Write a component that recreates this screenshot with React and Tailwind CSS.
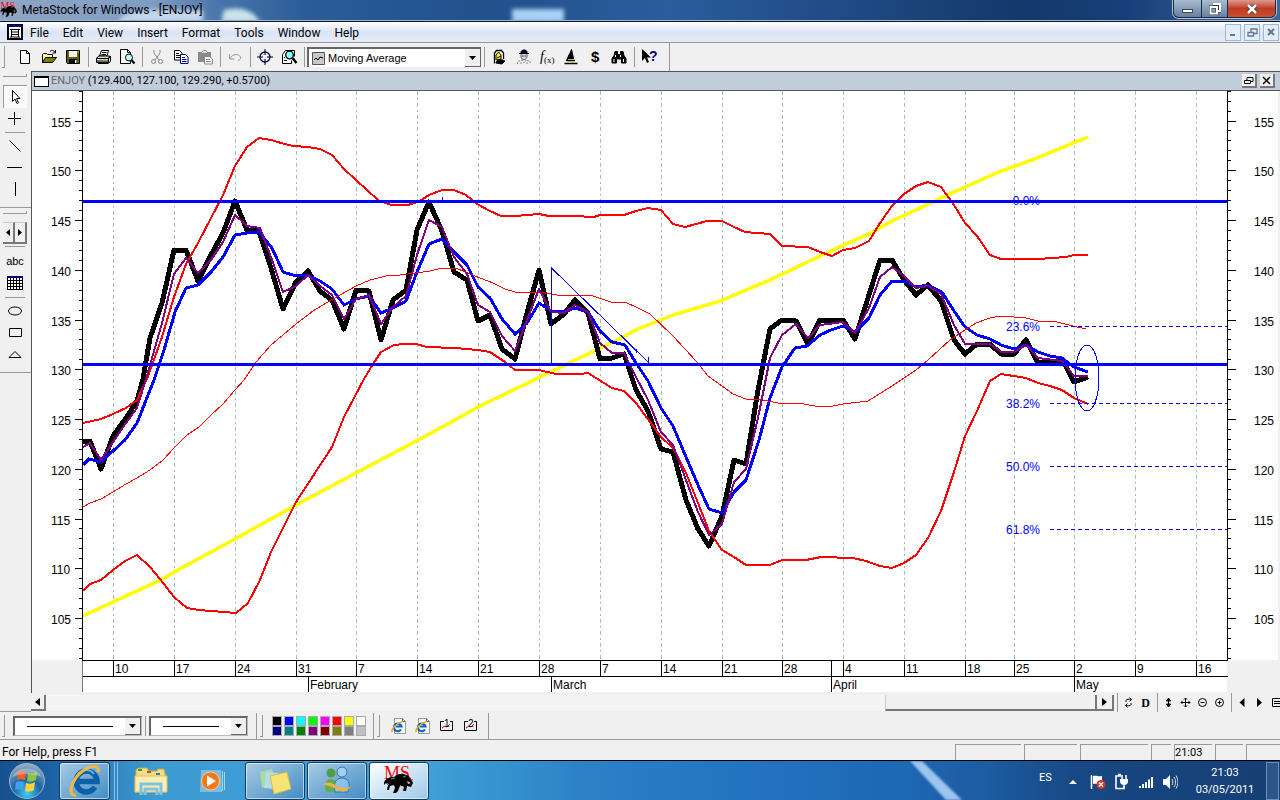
import { useState } from "react";

const menus = ["File", "Edit", "View", "Insert", "Format", "Tools", "Window", "Help"];

// ---------------------------------------------------------------- chart data
const price =
  "83,441 90,441 101,469 113,436 126,418 137,401 143,379 150,338 162,303 174,250 186,250 198,281 211,255 223,233 235,201 247,230 259,231 271,268 283,309 296,282 308,271 320,291 332,300 344,329 356,290 369,291 381,340 393,300 406,290 417,230 429,202 442,231 454,272 467,280 478,321 490,315 502,349 515,359 527,313 539,270 551,324 564,314 575,300 588,313 600,359 612,358 624,354 636,390 648,411 661,449 673,452 686,500 698,529 709,546 722,516 734,460 746,464 758,390 770,329 782,320 796,321 808,344 820,320 832,321 843,320 855,339 868,298 880,260 892,260 904,280 916,295 928,285 941,301 954,340 965,354 977,344 990,344 1001,354 1014,354 1026,340 1038,363 1050,361 1063,361 1074,382 1088,377";
const fastAverage =
  "83,447 90,443 101,460 113,442 126,423 137,408 146,379 162,323 174,274 186,258 198,273 211,260 223,242 235,215 247,226 260,228 271,257 283,292 296,286 308,275 320,286 332,295 344,319 356,299 369,295 381,324 393,307 406,296 417,255 429,220 442,227 454,257 467,274 478,305 490,312 502,336 515,351 527,320 539,289 551,312 564,313 575,305 588,312 600,343 612,353 624,353 636,377 648,400 661,432 673,445 686,480 698,512 709,535 722,524 734,482 746,469 758,418 770,358 782,335 796,324 808,338 820,325 843,322 855,333 869,308 880,277 892,267 904,276 916,288 928,286 941,294 954,325 965,344 990,344 1001,352 1014,352 1026,345 1038,358 1062,361 1074,376 1088,376";
const slowAverage =
  "83,465 89,459 101,462 113,451 125,440 137,423 154,380 164,350 175,312 186,288 198,285 211,272 223,257 235,235 247,233 259,232 272,248 283,272 296,276 308,275 320,281 332,289 344,305 356,299 369,296 381,313 393,308 406,301 417,272 429,244 442,239 454,252 467,265 478,287 490,298 502,319 515,334 527,323 539,303 551,311 564,312 575,308 588,312 600,331 612,342 625,345 636,363 648,381 661,408 673,426 686,457 698,485 709,509 722,513 734,492 746,480 759,440 770,398 782,367 795,348 807,346 820,335 831,330 843,326 855,332 869,318 880,295 892,281 904,281 916,287 928,285 942,292 954,311 965,327 977,335 990,339 1001,345 1014,349 1026,345 1038,352 1050,356 1062,358 1074,367 1088,372";
const upperBand =
  "83,423 101,419 113,414 126,408 137,400 147,379 162,337 174,297 186,264 198,243 223,195 235,166 247,147 259,138 271,140 281,143 293,146 308,147 320,149 332,155 344,169 356,180 378,200 391,205 408,205 420,201 429,195 442,190 454,190 466,195 477,204 490,211 501,216 515,216 527,215 539,214 549,216 574,216 594,217 600,215 624,215 636,211 648,208 661,210 673,224 685,227 707,221 722,221 734,227 745,232 770,234 782,246 808,247 820,252 832,256 843,250 855,248 869,241 880,223 892,206 904,194 916,186 928,182 941,187 954,205 965,223 977,236 990,255 1001,259 1038,259 1066,257 1074,255 1088,255";
const lowerBand =
  "83,591 90,584 101,580 113,570 125,561 137,555 150,567 160,579 174,597 187,608 199,610 236,613 248,603 260,580 271,552 296,502 332,447 344,417 364,379 373,364 381,352 394,345 405,344 416,344 427,347 455,348 478,350 490,352 505,362 515,370 539,370 556,374 580,374 588,373 612,388 624,391 636,403 661,437 673,448 686,473 698,503 709,531 722,550 734,557 746,565 770,565 782,560 806,560 821,557 853,558 866,561 880,566 892,568 904,563 916,555 928,538 941,511 954,472 965,436 977,411 990,381 1001,374 1026,378 1038,383 1050,386 1062,390 1074,398 1088,404";
const midBand =
  "83,507 90,503 101,499 113,492 126,484 137,478 150,470 163,460 174,448 187,435 199,427 211,415 223,404 235,390 244,380 256,362 271,345 296,324 313,311 333,299 356,286 370,280 386,276 400,275 416,273 430,271 442,268 458,269 480,278 493,283 505,289 515,292 539,292 563,296 590,295 611,302 625,302 638,308 650,314 673,336 696,361 708,376 722,386 733,394 746,399 763,400 783,404 798,403 815,406 833,406 843,404 868,401 892,386 916,370 928,360 950,340 965,330 976,323 990,318 1001,316 1026,318 1038,321 1053,321 1073,326 1086,329";
const trend =
  "83,616 113,602 163,579 174,572 235,539 296,505 356,473 420,439 455,420 478,407 563,366 623,337 638,329 673,315 720,301 770,280 820,256 855,240 869,234 892,221 965,187 1001,171 1032,160 1088,137";

const weeks = [
  [113, "10"], [174, "17"], [235, "24"], [296, "31"], [356, "7"], [417, "14"], [478, "21"],
  [539, "28"], [600, "7"], [661, "14"], [722, "21"], [782, "28"], [843, "4"], [904, "11"],
  [965, "18"], [1014, "25"], [1074, "2"], [1135, "9"], [1196, "16"],
];
const months = [[308, "February"], [551, "March"], [831, "April"], [1074, "May"]];
const levels = [[326, "23.6%"], [403, "38.2%"], [466, "50.0%"], [529, "61.8%"]];
const ticks = Array.from({ length: 58 }, (_, i) => 101 + i);
const tickY = (v) => Math.round(120.5 + (155 - v) * 9.95) + 0.5;

const PriceChart = () => (
  <svg viewBox="32 91 1248 602" className="block h-auto w-full" role="img" aria-label="ENJOY price chart">
    <rect x="32" y="91" width="1248" height="602" fill="#f0f0f0" />
    <rect x="32" y="91" width="1246" height="569" fill="#fff" />
    <rect x="82" y="660" width="1145" height="32" fill="#fff" />
    <g shapeRendering="crispEdges" fill="none">
      {weeks.map(([x]) => (
        <path key={x} d={`M${x + 0.5} 91V660`} stroke="#a3bfa9" strokeDasharray="4 3 2 3" />
      ))}
      <polyline points={trend} stroke="#ff0" strokeWidth="3.5" />
      <polyline points={price} stroke="#000" strokeWidth="5" strokeLinejoin="round" />
      <polyline points={slowAverage} stroke="#00f" strokeWidth="3" />
      <polyline points={upperBand} stroke="#f00" strokeWidth="2" />
      <polyline points={lowerBand} stroke="#f00" strokeWidth="2" />
      <polyline points={midBand} stroke="#f00" />
      <polyline points={fastAverage} stroke="#800080" strokeWidth="2" />
      <path d="M83 201.5H1227M83 364.5H1227" stroke="#00f" strokeWidth="3" />
      <path d="M551.5 366V268L648 362M648.5 363V357M636.5 353V349M442.5 200V197" stroke="#00f" />
      {levels.map(([y]) => (
        <path key={y} d={`M1050 ${y + 0.5}H1227`} stroke="#00f" strokeDasharray="4 3" />
      ))}
      <ellipse cx="1087" cy="378" rx="12" ry="33" stroke="#00f" />
      <path d="M82.5 91V692M1227.5 91V660M82 660.5H1228M82 676.5H1228" stroke="#000" />
      <path d="M82.5 661V692" stroke="#777" />
      {ticks.map((v) => (
        <path
          key={v}
          d={v % 5 ? `M79 ${tickY(v)}H82M1228 ${tickY(v)}H1231` : `M75 ${tickY(v)}H82M1228 ${tickY(v)}H1236`}
          stroke="#000"
        />
      ))}
      {weeks.map(([x]) => (
        <path key={x} d={`M${x + 0.5} 661V676`} stroke="#000" />
      ))}
      {months.map(([x]) => (
        <path key={x} d={`M${x + 0.5} 677V692`} stroke="#000" />
      ))}
      <path d="M831.5 661V676" stroke="#000" />
    </g>
    <g className="font-['Liberation_Sans',Arial,sans-serif] text-[12px]" fill="#000">
      {ticks.filter((v) => v % 5 === 0 && v > 101).map((v) => (
        <g key={v}>
          <text x="51" y={tickY(v) + 5}>{v}</text>
          <text x="1254" y={tickY(v) + 5}>{v}</text>
        </g>
      ))}
      {weeks.map(([x, label]) => (
        <text key={x} x={x + 2} y="673">{label}</text>
      ))}
      {months.map(([x, label]) => (
        <text key={x} x={x + 2} y="689">{label}</text>
      ))}
      <g fill="#00f" textAnchor="end">
        <text x="1040" y="205">0.0%</text>
        {levels.map(([y, label]) => (
          <text key={y} x="1040" y={y + 5}>{label}</text>
        ))}
      </g>
    </g>
  </svg>
);

// --------------------------------------------------------------------- icons
const Icon = ({ children, size = 16 }) => (
  <svg width={size} height={size} viewBox="0 0 16 16" fill="none" stroke="#000" aria-hidden="true" className="shrink-0 overflow-visible">
    {children}
  </svg>
);

const NewIcon = () => <Icon><path d="M3.5 1.5h6l3 3v10h-9zM9.5 1.5v3h3" fill="#fff" /></Icon>;
const OpenIcon = () => (
  <Icon>
    <path d="M1.5 13.5v-8l1-1h3l1 1h5v3" fill="#ffffa0" />
    <path d="M1.5 13.5l3-5h11l-4 5z" fill="#808000" />
    <path d="M9 2.5c2-2 4-1 5 1M14.5 1v3h-3" />
  </Icon>
);
const SaveIcon = () => (
  <Icon>
    <path d="M1.5 1.5h13v13h-12l-1-1z" fill="#606000" />
    <path d="M4 2h8v6H4z" fill="#f0f0f0" stroke="none" />
    <path d="M4 10h8v4H4z" fill="#000" stroke="none" />
    <path d="M10 11h1.5v3H10zM12.5 2.5h1v1h-1z" fill="#fff" stroke="none" />
  </Icon>
);
const PrintIcon = () => (
  <Icon>
    <path d="M4.5 7l2-5.500h7L12 7z" fill="#fff" />
    <path d="M7 3.5h4.500M6.500 5.500H11" />
    <path d="M1.500 9.500l2-2.500h11l-1 2.500v4h-12z" fill="#ddd" />
    <path d="M1 9.500h13l1.500-2.500v5l-2 2.500M1 12h12M3 14.500h10" />
    <path d="M8 11h3" stroke="#cc0" />
  </Icon>
);
const PreviewIcon = () => (
  <Icon>
    <path d="M1.500.5h7l3 3v11h-10z" fill="#fff" />
    <path d="M8.500.5v3h3" />
    <circle cx="10" cy="8.500" r="3.500" fill="#c0ffff" />
    <path d="M12.500 11l3 3.500" strokeWidth="2" />
  </Icon>
);
const CutIcon = () => (
  <Icon>
    <g stroke="#8a8a8a">
      <path d="M5 1v3l5 7M11 1v3l-5 7" />
      <circle cx="4.500" cy="12.500" r="2" /><circle cx="11.500" cy="12.500" r="2" />
    </g>
  </Icon>
);
const CopyIcon = () => (
  <Icon>
    <path d="M1.500 1.500h5l2.500 2.500v7h-7.500z" fill="#fff" />
    <path d="M3 4.500h3M3 6.500h4M3 8.500h4" />
    <path d="M7.500 5.500h5l2.500 2.500v6.500h-7.500z" fill="#fff" stroke="#000080" />
    <path d="M9 8.500h3M9 10.500h4.500M9 12.500h4.500" stroke="#000080" />
  </Icon>
);
const PasteIcon = () => (
  <Icon>
    <path d="M1 3h13v10H1z" fill="#8a8a8a" stroke="none" />
    <path d="M4.500 4.500V3l2-1.500h2l2 1.500v1.500z" fill="#ddd" stroke="#8a8a8a" />
    <path d="M7.500 7.500h5l3 2.500v5h-8z" fill="#f4f4f4" stroke="#8a8a8a" />
    <path d="M9 10.500h4M9 12.500h5" stroke="#8a8a8a" />
  </Icon>
);
const UndoIcon = () => (
  <Icon><path d="M2.500 5v5h5M3 9.500C6 4 12 5 13.500 8c.5 2-1 3-2.500 3.500" stroke="#999" /></Icon>
);
const TargetIcon = () => (
  <Icon>
    <circle cx="8" cy="8" r="5" stroke="#000060" strokeWidth="1.300" />
    <path d="M8 0v6M8 10v6M0 8h6M10 8h6" stroke="#000" />
  </Icon>
);
const ZoomIcon = () => (
  <Icon>
    <path d="M1.500 5.500v9h9v-3M1.500 5.500l3-4h9v6" fill="#fff" />
    <path d="M3 11.500h3M3 8.500h1" />
    <circle cx="8.500" cy="6" r="3.800" fill="#80ffff" strokeWidth="1.300" />
    <path d="M11.500 9l4 5" strokeWidth="2.400" />
  </Icon>
);
const ExpertIcon = () => (
  <Icon>
    <path d="M3.500 14.500V4l2-2.500h5l2 2.500v6" fill="#fff" strokeWidth="1.300" />
    <path d="M5 6l2.500-3L10 6v4l-5 1z" fill="#ff0" />
    <path d="M6 9l4-2M5 14c1-4 5-4 9-2l-3 3z" fill="#000" />
  </Icon>
);
const PersonIcon = () => (
  <Icon>
    <path d="M4 4.500h10M6 4V2.500l2-1.500h2.500L12 2.500V4z" fill="#000" />
    <path d="M8 3h2" stroke="#00f" />
    <path d="M6 5v3l1.500 2.500h3L12 8V5" fill="#ddd" stroke="#666" />
    <path d="M7 7h1.500M9.500 7H11" stroke="#222" />
    <path d="M2.500 15l.5-2.500 4-1.500 2 3 2-3 4 1.500.5 2.500M5 14h2M11 14h2" stroke="#888" strokeDasharray="2 1" />
  </Icon>
);
const FxIcon = () => (
  <Icon>
    <g fill="#000" stroke="none" className="font-['Liberation_Serif',serif]">
      <text x="1" y="12" className="text-[14px] italic">f</text>
      <text x="5" y="14" className="text-[9px]">(x)</text>
    </g>
  </Icon>
);
const ExplorerIcon = () => (
  <Icon>
    <path d="M8.500.5l1 4 1 5H5z" fill="#000" />
    <path d="M7 4.500L3.500 12M1.500 14.500h13M4 11.500h8" strokeWidth="1.600" />
    <path d="M6 13h6" stroke="#cc0" />
  </Icon>
);
const DollarIcon = () => (
  <Icon>
    <text x="4" y="13" fill="#000" stroke="none" className="font-['Liberation_Sans',sans-serif] text-[15px] font-bold">$</text>
  </Icon>
);
const BinocularsIcon = () => (
  <Icon>
    <path d="M4 2.500h2.500v3h3v-3H12l1 4 2 3v4.500h-4.500V10h-5v4H1V9.500l2-3z" fill="#000" />
    <path d="M4.500 6v2M9.500 6v2M3 10v3M12.500 10v3" stroke="#fff" />
  </Icon>
);
const HelpIcon = () => (
  <Icon>
    <path d="M1 0v12l3-3 2 5 2-1-2-4.500h4z" fill="#000" stroke="none" />
    <text x="8" y="12" fill="#000080" stroke="none" className="font-['Liberation_Sans',sans-serif] text-[14px] font-bold">?</text>
  </Icon>
);

const PointerIcon = () => <Icon><path d="M4.500 1.500v11l2.500-2.500 2 4.500 1.500-.8-2-4.200H12z" fill="#fff" /></Icon>;
const CrossIcon = () => <Icon><path d="M1 7.500h13M7.500 1v13" /></Icon>;
const DiagonalIcon = () => <Icon><path d="M2.500 2.500l11 11" /></Icon>;
const HLineIcon = () => <Icon><path d="M0 7.500h15" /></Icon>;
const VLineIcon = () => <Icon><path d="M8.500 0v14" /></Icon>;
const GridIcon = () => (
  <Icon>
    <path d="M0 1h16v14H0z" fill="#fff" stroke="none" />
    <path d="M.5 1v14M3.500 1v14M6.500 1v14M9.500 1v14M12.500 1v14M15.500 1v14M0 5.500h16M0 8.500h16M0 11.500h16M0 14.500h16" />
    <path d="M0 2h16" stroke="#000080" strokeWidth="2" />
  </Icon>
);
const EllipseIcon = () => <Icon><ellipse cx="8" cy="8" rx="6.500" ry="4" /></Icon>;
const RectIcon = () => <Icon><path d="M2.500 3.500h12v8h-12z" /></Icon>;
const TriangleIcon = () => <Icon><path d="M8 4.500l6 6H2z" /></Icon>;

const BullIcon = ({ size = 32 }) => (
  <svg width={size} height={size} viewBox="0 0 32 32" aria-hidden="true" className="shrink-0 overflow-visible">
    <text x="1" y="14" fill="#f00" className="font-['Liberation_Serif',serif] text-[18px]">MS</text>
    <path
      d="M1 18c1-5 6-6 10-6 4-4 9-4 12-2 3 0 5 3 7 8l-2 4-4-1-1 5h-3l1-4-4-1-2 5-2 2h-3l2-5-1-3-4 1-1 4H4l1-5-2-2-2 2z"
      fill="#000"
    />
    <path d="M17 20l4 2-2 4zM24 16l4 2-3 1z" fill="#c8c8c8" />
    <path d="M8 14l4-1M20 12l3-1M4 18l2 2M28 16l2-2" stroke="#2aa" />
    <path d="M26 12l3 4" stroke="#f00" />
  </svg>
);

const WebPageIcon = () => (
  <svg width="16" height="18" viewBox="0 0 16 18" aria-hidden="true">
    <path d="M3.500 1.500h8l3 3v12h-11z" fill="#f8f8f8" stroke="#999" />
    <path d="M11.500 1.500v3h3" fill="none" stroke="#666" />
    <path d="M10 12.500a3.800 3.800 0 1 1 .5-3H5" fill="none" stroke="#0a62c4" strokeWidth="2.200" />
    <path d="M1 15c-1-3 5-9 10-10" fill="none" stroke="#f0a818" strokeWidth="1.500" />
  </svg>
);
const LayoutIcon = ({ n }) => (
  <svg width="16" height="16" viewBox="0 0 16 16" fill="none" aria-hidden="true" className="overflow-visible">
    <path d="M5 3.500H1.500v9h12v-9H11" stroke="#000" />
    <path d="M3 10l3-2 2 1 3-3" stroke="#e00" />
    <text x="5" y="9" fill="#000" className="font-['Liberation_Sans',sans-serif] text-[10px]">{n}</text>
  </svg>
);

// ------------------------------------------------------------------ controls
const ToolButton = ({ label, children }) => (
  <button type="button" aria-label={label} className="flex h-[22px] w-6 shrink-0 items-center justify-center">
    {children}
  </button>
);
const Separator = () => (
  <div className="flex h-5 w-[6px] shrink-0 justify-center">
    <span className="w-px bg-[#9a9a9a]" />
  </div>
);
const Grip = () => <span className="h-[22px] w-[3px] shrink-0 border-r border-b border-[#999]" />;
const Arrow = ({ className = "" }) => (
  <span className={`pointer-events-none flex items-center justify-center border-r border-b border-[#666] bg-[#f0f0f0] ${className}`}>
    <svg width="7" height="4" viewBox="0 0 7 4" aria-hidden="true"><path d="M0 0h7L3.500 4z" /></svg>
  </span>
);

const StylePicker = ({ label, className }) => (
  <label className={`relative flex h-5 items-center border-t-2 border-l-2 border-r border-b border-[#666] border-r-[#bbb] border-b-[#bbb] bg-white ${className}`}>
    <select aria-label={label} className="absolute inset-0 w-full appearance-none bg-transparent text-transparent">
      <option>Solid</option>
      <option>Dashed</option>
    </select>
    <span className="mr-3 ml-3 h-px flex-1 bg-black" />
    <Arrow className="h-full w-4" />
  </label>
);

const TitleBar = () => (
  <header className="relative flex h-[22px] items-start overflow-hidden border-b border-[#101828] bg-[linear-gradient(90deg,#8fa6c4_0%,#7f9cc2_12%,#4a76ab_17%,#2b5c98_24%,#22518c_38%,#2b5c9c_52%,#204c86_65%,#14386c_80%,#17407a_88%,#3f6797_100%)]">
    <svg className="absolute inset-0 h-full w-full" aria-hidden="true">
      <g className="blur-[2px]">
        <path d="M118 22c4-9 20-12 40-12h45v12z" fill="#c3d8ee" />
        <path d="M221 22l3-12c15-4 30 0 36 12z" fill="#c9e3ea" />
        <path d="M512 9h52v13h-52z" fill="#a9d0f4" />
      </g>
      <path d="M0 20.500h1280" stroke="#9db4d4" />
    </svg>
    <div className="relative flex flex-1 items-center gap-1">
      <BullIcon size={18} />
      <h1 className="text-[12px] leading-5 text-black">MetaStock for Windows - [ENJOY]</h1>
    </div>
    <div className="relative mr-1 flex h-[18px] overflow-hidden rounded-b-md border border-t-0 border-[#1c2b40] shadow-[0_0_0_1px_#b5c3d6]">
      <button type="button" aria-label="Minimize" className="flex w-7 items-center justify-center border-r border-[#1c2b40] bg-linear-to-b from-[#a9bbd0] to-[#66809f]">
        <span className="mt-1 h-1 w-[11px] border border-[#445] bg-white" />
      </button>
      <button type="button" aria-label="Restore" className="flex w-[26px] items-center justify-center border-r border-[#1c2b40] bg-linear-to-b from-[#a9bbd0] to-[#66809f]">
        <svg width="12" height="12" viewBox="0 0 12 12" fill="none" aria-hidden="true">
          <path d="M4 1h7v7H9M1.500 4h6.500v6.500H1.500z" stroke="#334" strokeWidth="3" />
          <path d="M4 1h7v7H9M1.500 4h6.500v6.500H1.500z" stroke="#fff" strokeWidth="2" />
        </svg>
      </button>
      <button type="button" aria-label="Close" className="flex w-[47px] items-center justify-center bg-linear-to-b from-[#dc9a90] via-[#c03a22] to-[#c8502f]">
        <svg width="12" height="10" viewBox="0 0 12 10" aria-hidden="true">
          <path d="M2 1l8 8M10 1L2 9" stroke="#433" strokeWidth="4" />
          <path d="M2 1l8 8M10 1L2 9" stroke="#fff" strokeWidth="2.500" />
        </svg>
      </button>
    </div>
  </header>
);

const MenuBar = () => (
  <nav className="flex h-[21px] items-center border-b border-[#999] bg-linear-to-b from-white via-[#dbe3f5] to-[#e6ecf8] pr-px pl-[7px]">
    <svg width="16" height="16" viewBox="0 0 16 16" fill="none" stroke="#000" aria-hidden="true">
      <path d="M1 1h14v14H1z" fill="#fff" strokeWidth="2" />
      <path d="M1 2h14" stroke="#000080" strokeWidth="2" />
      <path d="M3 5.500h10M3 13h10M4.500 5v8M11.500 5v8M5 8h6M5 10.500h6" />
    </svg>
    <ul className="flex flex-1">
      {menus.map((m) => (
        <li key={m}>
          <button type="button" className="px-[7px] text-[12px] leading-5">{m}</button>
        </li>
      ))}
    </ul>
    <div className="flex gap-[3px] text-[#66788f]">
      {["M5 11h5", "M4 8.500h5.500v3.500H4zM7 8V5h6v4.500h-3", "M5 5l6 6M11 5l-6 6"].map((d, i) => (
        <button key={d} type="button" aria-label={["Minimize chart", "Restore chart", "Close chart"][i]} className="flex h-[17px] w-4 items-center justify-center border border-[#9db8d2] bg-[#e4eefb]">
          <svg width="16" height="16" viewBox="0 0 16 16" fill="none" stroke="currentColor" strokeWidth={i === 1 ? 1.3 : 2} aria-hidden="true" className="shrink-0"><path d={d} /></svg>
        </button>
      ))}
    </div>
  </nav>
);

const Toolbar = () => {
  const [indicator, setIndicator] = useState("Moving Average");
  return (
    <div className="flex h-7 items-center pl-[2px]">
      <Grip />
      <span className="w-2" />
      <ToolButton label="New"><NewIcon /></ToolButton>
      <ToolButton label="Open"><OpenIcon /></ToolButton>
      <ToolButton label="Save"><SaveIcon /></ToolButton>
      <Separator />
      <ToolButton label="Print"><PrintIcon /></ToolButton>
      <ToolButton label="Print preview"><PreviewIcon /></ToolButton>
      <Separator />
      <ToolButton label="Cut"><CutIcon /></ToolButton>
      <ToolButton label="Copy"><CopyIcon /></ToolButton>
      <ToolButton label="Paste"><PasteIcon /></ToolButton>
      <Separator />
      <ToolButton label="Undo"><UndoIcon /></ToolButton>
      <Separator />
      <ToolButton label="Crosshair"><TargetIcon /></ToolButton>
      <ToolButton label="Zoom"><ZoomIcon /></ToolButton>
      <Separator />
      <label className="relative flex h-5 w-[174px] items-center border-t-2 border-l-2 border-[#666] bg-white">
        <svg width="13" height="13" viewBox="0 0 13 13" aria-hidden="true" className="ml-[3px]">
          <path d="M.5.5h12v12H.5z" fill="#c8c8c8" stroke="#555" />
          <path d="M2 8l2-2 2 2 2-3 3 1" fill="none" stroke="#000" />
        </svg>
        <select
          aria-label="Indicator"
          value={indicator}
          onChange={(e) => setIndicator(e.target.value)}
          className="flex-1 appearance-none bg-transparent pl-[3px] font-['Liberation_Sans',Arial,sans-serif] text-[11px] leading-4"
        >
          <option>Moving Average</option>
          <option>Bollinger Bands</option>
        </select>
        <Arrow className="absolute top-0 right-0 h-full w-4" />
      </label>
      <Separator />
      <ToolButton label="Expert advisor"><ExpertIcon /></ToolButton>
      <ToolButton label="Commentary"><PersonIcon /></ToolButton>
      <ToolButton label="Indicator builder"><FxIcon /></ToolButton>
      <ToolButton label="Explorer"><ExplorerIcon /></ToolButton>
      <ToolButton label="System tester"><DollarIcon /></ToolButton>
      <ToolButton label="Find"><BinocularsIcon /></ToolButton>
      <Separator />
      <ToolButton label="Context help"><HelpIcon /></ToolButton>
      <span className="ml-2 h-7 w-px bg-[#999]" />
    </div>
  );
};

const PaletteRule = () => <hr className="my-[2px] ml-[5px] w-5 border-[#999]" />;
const PaletteGrip = () => <div className="ml-[3px] h-[3px] w-6 border-r border-b border-[#999]" />;

const DrawingPalette = () => (
  <aside className="flex w-[31px] shrink-0 flex-col border-b border-[#999] pt-[3px]">
    <PaletteGrip />
    <div className="mt-2 flex flex-col pl-[3px]">
      <div className="w-6 border-t border-l border-[#999] bg-[#fafafa]"><ToolButton label="Select"><PointerIcon /></ToolButton></div>
      <ToolButton label="Crosshair line"><CrossIcon /></ToolButton>
    </div>
    <PaletteRule />
    <div className="flex flex-col pl-[3px]">
      <ToolButton label="Trendline"><DiagonalIcon /></ToolButton>
      <ToolButton label="Horizontal line"><HLineIcon /></ToolButton>
      <ToolButton label="Vertical line"><VLineIcon /></ToolButton>
    </div>
    <hr className="mt-[6px] border-[#999]" />
    <div className="mt-[3px]"><PaletteGrip /></div>
    <div className="mt-2 ml-[3px] flex">
      {["M4 0v7L0 3.500z", "M0 0v7l4-3.500z"].map((d, i) => (
        <button key={d} type="button" aria-label={i ? "Scroll right" : "Scroll left"} className="flex h-[22px] w-3 items-center justify-center border-t border-r-2 border-b-2 border-[#777] border-t-[#ccc]">
          <svg width="4" height="7" viewBox="0 0 4 7" aria-hidden="true"><path d={d} /></svg>
        </button>
      ))}
    </div>
    <PaletteRule />
    <div className="flex flex-col py-px pl-[3px]">
      <button type="button" className="h-[22px] w-6 font-['Liberation_Sans',Arial,sans-serif] text-[11px] leading-4">abc</button>
      <ToolButton label="Grid"><GridIcon /></ToolButton>
    </div>
    <PaletteRule />
    <div className="flex flex-col pl-[3px]">
      <ToolButton label="Ellipse"><EllipseIcon /></ToolButton>
      <ToolButton label="Rectangle"><RectIcon /></ToolButton>
      <ToolButton label="Triangle"><TriangleIcon /></ToolButton>
    </div>
    <hr className="mt-[6px] border-[#999]" />
  </aside>
);

const MiniButton = ({ label, children }) => (
  <button type="button" aria-label={label} className="flex h-4 w-[17px] shrink-0 items-center justify-center">
    <svg width="11" height="11" viewBox="0 0 11 11" fill="none" stroke="#000" aria-hidden="true">{children}</svg>
  </button>
);

const ScrollRow = () => (
  <div className="flex h-[19px] items-center overflow-hidden">
    <button type="button" aria-label="Scroll back" className="flex h-4 w-[15px] shrink-0 items-center justify-center border-r-2 border-b-2 border-[#777]">
      <svg width="5" height="8" viewBox="0 0 5 8" aria-hidden="true"><path d="M5 0v8L0 4z" /></svg>
    </button>
    <div className="h-4 flex-1 bg-[#f4f4f4]" />
    <div className="h-4 w-[212px] border-r-2 border-b-2 border-l border-[#777] border-l-[#ccc]" />
    <button type="button" aria-label="Scroll forward" className="flex h-4 w-[17px] shrink-0 items-center justify-center border-r-2 border-b-2 border-[#777]">
      <svg width="5" height="8" viewBox="0 0 5 8" aria-hidden="true"><path d="M0 0v8l5-4z" /></svg>
    </button>
    <Separator />
    <MiniButton label="Refresh">
      <path d="M3 5V3.500C3 2 7 2 8 2.500M8 6v1.500C8 9 4 9 3 8.500M6.500 .5l2 2-2 2M4.500 6.500l-2 2 2 2" />
    </MiniButton>
    <button type="button" className="h-4 w-[17px] font-['Liberation_Serif',serif] text-[12px] leading-4 font-bold">D</button>
    <Separator />
    <MiniButton label="Fit vertically"><path d="M5.500 1l2 3h-4zM5.500 10l2-3h-4zM5.500 3v5" fill="#000" /></MiniButton>
    <MiniButton label="Move"><path d="M5.500 1v9M1 5.500h9M4 2.500L5.500 1 7 2.500M4 8.500L5.500 10 7 8.500M2.500 4L1 5.500 2.500 7M8.500 4L10 5.500 8.500 7" /></MiniButton>
    <MiniButton label="Zoom out"><circle cx="5.500" cy="5.500" r="4" /><path d="M3.500 5.500h4" /></MiniButton>
    <MiniButton label="Zoom in"><circle cx="5.500" cy="5.500" r="4" /><path d="M3.500 5.500h4M5.500 3.500v4" /></MiniButton>
    <Separator />
    <MiniButton label="Previous"><path d="M7.500 1v9l-5-4.500z" fill="#000" stroke="none" /></MiniButton>
    <MiniButton label="Next"><path d="M3 1v9l5-4.500z" fill="#000" stroke="none" /></MiniButton>
    <div className="w-3 shrink-0 overflow-hidden">
      <MiniButton label="Chart window"><path d="M1.500 1.500h9v8h-9zM3 4.500h6M3 6.500h6" /></MiniButton>
    </div>
  </div>
);

const ChartWindow = () => (
  <main className="min-w-0 flex-1">
    <section className="border-t border-l border-[#555]">
      <div className="flex h-[19px] items-center border-b border-[#555] bg-[#c1cddb] px-[2px]">
        <span className="h-[11px] w-[15px] border border-t-2 border-black bg-white" />
        <h2 className="ml-[2px] flex-1 text-[11px] leading-4 whitespace-pre text-black">
          <span className="text-[#666]">ENJOY</span> (129.400, 127.100, 129.290, +0.5700)
        </h2>
        <div className="mr-[3px] flex gap-[3px]">
          {["M2.500 6.500h6v3h-6zM5 6V3.500h6v4H9", "M3 3l7 7M10 3l-7 7"].map((d, i) => (
            <button key={d} type="button" aria-label={i ? "Close window" : "Restore window"} className="flex h-[14px] w-[15px] items-center justify-center border-r-2 border-b-2 border-[#777] bg-[#f0f0f0]">
              <svg width="13" height="13" viewBox="0 0 13 13" fill="none" stroke="#000" strokeWidth={i ? 1.5 : 1} aria-hidden="true" className="shrink-0"><path d={d} /></svg>
            </button>
          ))}
        </div>
      </div>
      <PriceChart />
    </section>
    <ScrollRow />
  </main>
);

const swatches = [
  ["black", "bg-[#000]"], ["blue", "bg-[#00f]"], ["cyan", "bg-[#0ff]"], ["lime", "bg-[#0f0]"],
  ["magenta", "bg-[#f0f]"], ["red", "bg-[#f00]"], ["yellow", "bg-[#ff0]"], ["white", "bg-[#fff]"],
  ["navy", "bg-[#000080]"], ["teal", "bg-[#008080]"], ["green", "bg-[#008000]"], ["purple", "bg-[#800080]"],
  ["maroon", "bg-[#800000]"], ["olive", "bg-[#808000]"], ["gray", "bg-[#808080]"], ["silver", "bg-[#c0c0c0]"],
];

const StyleBar = () => (
  <div className="flex h-7 items-center border-b border-[#999] pl-[2px]">
    <Grip />
    <StylePicker label="Line style" className="ml-2 w-[129px]" />
    <span className="mx-[3px] h-5 w-px bg-[#999]" />
    <StylePicker label="Line weight" className="w-[99px]" />
    <span className="mr-[3px] ml-2 h-[26px] w-px bg-[#999]" />
    <Grip />
    <div className="ml-[9px] grid grid-cols-8 gap-x-[2px]">
      {swatches.map(([name, bg]) => (
        <button key={name} type="button" aria-label={name} className={`h-[10px] w-[10px] border border-[#aaa] ${bg}`} />
      ))}
    </div>
    <span className="mr-[3px] ml-[7px] h-[26px] w-px bg-[#999]" />
    <Grip />
    <div className="ml-[7px] flex">
      <ToolButton label="Web page"><WebPageIcon /></ToolButton>
      <ToolButton label="Online data"><WebPageIcon /></ToolButton>
      <ToolButton label="Layout 1"><LayoutIcon n="1" /></ToolButton>
      <ToolButton label="Layout 2"><LayoutIcon n="2" /></ToolButton>
    </div>
    <span className="ml-[5px] h-[26px] w-px bg-[#999]" />
  </div>
);

const StatusBar = () => (
  <footer className="flex h-5 items-end gap-[3px] pl-[2px] text-[12px]">
    <p className="flex-1 leading-4">For Help, press F1</p>
    <span className="h-4 w-[66px] border-t border-l border-[#999]" />
    <span className="h-4 w-[53px] border-t border-l border-[#999]" />
    <span className="h-4 w-[68px] border-t border-l border-[#999]" />
    <span className="h-4 w-5 border-t border-l border-[#999]" />
    <span className="h-4 w-[38px] border-t border-l border-[#999] text-[11px] leading-4">21:03</span>
    <span className="h-4 w-7 border-t border-l border-[#999]" />
    <span className="h-4 w-[34px] border-t border-l border-[#999]" />
  </footer>
);

// ------------------------------------------------------------------- taskbar
const StartOrb = () => (
  <svg width="38" height="38" viewBox="0 0 38 38" aria-hidden="true">
    <defs>
      <radialGradient id="orb" cx="50%" cy="85%" r="80%">
        <stop offset="0" stopColor="#3fd0f0" />
        <stop offset=".5" stopColor="#1c64a4" />
        <stop offset="1" stopColor="#8fa8bc" />
      </radialGradient>
    </defs>
    <circle cx="19" cy="19" r="17.500" fill="url(#orb)" stroke="#9ab6cf" />
    <path d="M10 10c3-2 6-1 8 0l-1 8c-3-1-6-1-8 0z" fill="#f0602c" />
    <path d="M20 11c3 1 6 1 9-1l-1 8c-3 2-6 2-9 1z" fill="#8cc63e" />
    <path d="M8 20c3-1 6-1 8 0l-1 8c-3-1-6-1-8 0z" fill="#3fa4ec" />
    <path d="M18 21c3 1 6 1 9-1l-1 8c-3 2-6 2-9 1z" fill="#fcd03c" />
    <path d="M4 15a16 13 0 0 1 30 0c-9-4-21-4-30 0z" fill="#fff" opacity=".3" />
  </svg>
);
const BrowserIcon = () => (
  <svg width="34" height="34" viewBox="0 0 34 34" fill="none" aria-hidden="true">
    <path d="M27 23c-2 3-5 5-9 5a10.500 10.500 0 1 1 11-10.500H11" stroke="#0d5fa8" strokeWidth="5.500" />
    <path d="M9 12a10 10 0 0 1 17-2" stroke="#5cb8ee" strokeWidth="2" />
    <path d="M8 31C-2 33 4 14 16 6c8-5 16-5 14 2" stroke="#f4b83c" strokeWidth="3" />
  </svg>
);
const FolderIcon = () => (
  <svg width="34" height="30" viewBox="0 0 34 30" aria-hidden="true">
    <path d="M2 4l2-2h9l2 3h8l1-2h6l1 4 1 19H1z" fill="#f3dc84" stroke="#c9a440" />
    <path d="M4 4h4" stroke="#2a9a3a" strokeWidth="2" />
    <path d="M13 6h4" stroke="#d04830" strokeWidth="2" />
    <path d="M22 8h4" stroke="#2a7ac8" strokeWidth="2" />
    <path d="M1 10h32v16H1z" fill="#fbeeb0" stroke="#e0c068" />
    <path d="M7 29V18h20v11M11 29v-6h12v6" fill="none" stroke="#7ec4e4" strokeWidth="3" />
  </svg>
);
const MediaIcon = () => (
  <svg width="26" height="26" viewBox="0 0 26 26" aria-hidden="true">
    <path d="M2 2h20l1 22H1z" fill="#8cc4ea" opacity=".8" />
    <path d="M23.500 3v20M25.500 4v18" stroke="#a8d4f0" />
    <circle cx="11.500" cy="13" r="9" fill="#f07818" stroke="#fcc890" />
    <path d="M8 7.500v11l9-5.500z" fill="#fff" />
  </svg>
);
const NotesIcon = () => (
  <svg width="32" height="28" viewBox="0 0 32 28" aria-hidden="true">
    <path d="M1 5l12-3 4 14-14 5z" fill="#a8dca0" />
    <path d="M7 5l12 1-2 16-12-1z" fill="#b0dcec" />
    <path d="M11 9l17-4 4 17-17 5z" fill="#f6e474" stroke="#d8bc40" />
  </svg>
);
const PeopleIcon = () => (
  <svg width="32" height="30" viewBox="0 0 32 30" aria-hidden="true">
    <circle cx="10" cy="7" r="4.500" fill="#4ca040" />
    <path d="M5 26c-2-8 0-13 5-13s7 5 5 13z" fill="#5cb050" />
    <circle cx="21" cy="6" r="5" fill="#a4d0f0" stroke="#3a70a8" />
    <path d="M14 26c-2-9 1-14 7-14s9 5 6 14z" fill="#8cc0ea" stroke="#3a70a8" />
    <path d="M1 19c5-4 9-3 15 1 5 3 9 3 14 0-3 6-9 7-15 3-6-3-8-4-14-4z" fill="#f0b048" />
  </svg>
);

const TaskButton = ({ label, active, children, className }) => (
  <button
    type="button"
    aria-label={label}
    className={`flex h-[38px] items-center justify-center rounded-[3px] border border-[#0e3c66] shadow-[inset_0_0_0_1px_#ffffff90] ${
      active ? "bg-linear-to-br from-white to-[#9cc8e8]" : "bg-linear-to-br from-[#a8cbe4] to-[#3f8cc4]"
    } ${className}`}
  >
    {children}
  </button>
);

const Taskbar = () => (
  <div className="relative flex h-10 items-center overflow-hidden border-t border-black bg-[linear-gradient(90deg,#17508f_0%,#1d62a4_4%,#3d9bd2_12%,#3f9fd6_34%,#2c80c6_46%,#2272bf_60%,#1e68b4_70%,#1c5ca2_77%,#184884_84%,#163e74_100%)] text-[12px] text-white">
    <svg className="absolute inset-0 h-full w-full" viewBox="0 0 1280 39" preserveAspectRatio="none" aria-hidden="true">
      <path d="M910 0h12l40 39h-16z" fill="#9cc4ee" className="blur-[1px]" />
    </svg>
    <button type="button" aria-label="Start" className="relative ml-2"><StartOrb /></button>
    <div className="relative flex flex-1 items-center">
      <TaskButton label="Internet Explorer" className="ml-[13px] w-[51px]"><BrowserIcon /></TaskButton>
      <span className="ml-1 h-[38px] w-1 border-x border-[#8cc4e8]" />
      <button type="button" aria-label="Windows Explorer" className="ml-4"><FolderIcon /></button>
      <button type="button" aria-label="Media Player" className="ml-[31px]"><MediaIcon /></button>
      <TaskButton label="Sticky Notes" className="ml-5 w-[60px]"><NotesIcon /></TaskButton>
      <TaskButton label="Messenger" className="ml-[2px] w-[60px]"><PeopleIcon /></TaskButton>
      <TaskButton label="MetaStock" active className="ml-[2px] w-[60px]"><BullIcon /></TaskButton>
    </div>
    <div className="relative flex items-center">
      <span className="mb-1 w-[29px] text-[11px]">ES</span>
      <svg width="110" height="20" viewBox="1068 770 110 20" aria-hidden="true">
        <path d="M1069 783h8l-4-4z" fill="#fff" />
        <path d="M1091.500 774v14" stroke="#fff" strokeWidth="1.500" />
        <path d="M1093 775c3-1 5 1 9 0v8c-4 1-6-1-9 0z" fill="#fff" />
        <circle cx="1101" cy="783.500" r="4.500" fill="#e03020" />
        <path d="M1099 781.500l4 4M1103 781.500l-4 4" stroke="#fff" strokeWidth="1.500" />
        <path d="M1121 775h-5v12.500h8V785M1118 773.500h3" fill="none" stroke="#fff" strokeWidth="1.600" />
        <path d="M1120 778h8v2c0 3-2 4-4 4s-4-1-4-4z" fill="#fff" />
        <path d="M1122 774v4M1126 774v4M1124 784v3" stroke="#fff" strokeWidth="1.500" />
        <path d="M1140 787v-2M1143 787v-4M1146 787v-6M1149 787v-8.500M1152 787v-11" stroke="#fff" strokeWidth="2" />
        <path d="M1163 778h3l4-4v14l-4-4h-3z" fill="#fff" />
        <path d="M1172 778c1 2 1 4 0 6M1174 776c2 3 2 7 0 10M1176 774.500c2.500 4 2.500 9 0 13" fill="none" stroke="#cfe0f0" />
      </svg>
      <time className="ml-3 w-[70px] text-center text-[11px] leading-[17px]">
        21:03
        <br />
        03/05/2011
      </time>
      <button type="button" aria-label="Show desktop" className="mr-px ml-[6px] h-[38px] w-[13px] border border-[#6d8fb5] bg-[#2c5686]" />
    </div>
  </div>
);

const App = () => (
  <div className="bg-[#f0f0f0] font-['Roboto','Open_Sans',sans-serif] text-black">
    <TitleBar />
    <MenuBar />
    <Toolbar />
    <div className="flex">
      <DrawingPalette />
      <ChartWindow />
    </div>
    <StyleBar />
    <StatusBar />
    <Taskbar />
  </div>
);

export default App;
